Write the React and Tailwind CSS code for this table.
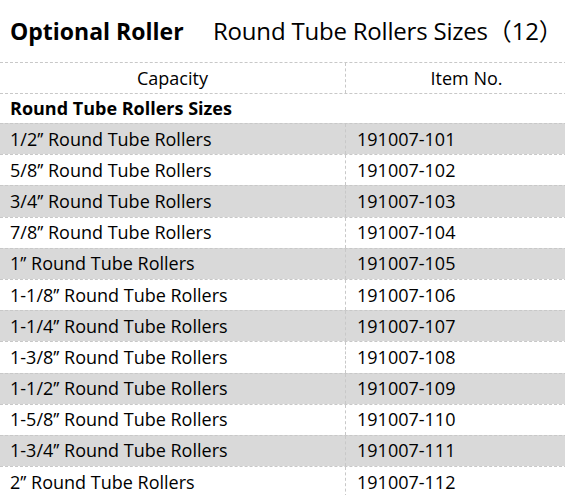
import React from "react";

const rows = [
  ["1/2’’ Round Tube Rollers", "191007-101"],
  ["5/8’’ Round Tube Rollers", "191007-102"],
  ["3/4’’ Round Tube Rollers", "191007-103"],
  ["7/8’’ Round Tube Rollers", "191007-104"],
  ["1’’ Round Tube Rollers", "191007-105"],
  ["1-1/8’’ Round Tube Rollers", "191007-106"],
  ["1-1/4’’ Round Tube Rollers", "191007-107"],
  ["1-3/8’’ Round Tube Rollers", "191007-108"],
  ["1-1/2’’ Round Tube Rollers", "191007-109"],
  ["1-5/8’’ Round Tube Rollers", "191007-110"],
  ["1-3/4’’ Round Tube Rollers", "191007-111"],
  ["2’’ Round Tube Rollers", "191007-112"],
];

const App = () => {
  return (
    <div
      className="w-[565px] h-[495px] overflow-hidden bg-white text-black"
      style={{ fontFamily: '"Open Sans", "Noto Sans CJK SC", sans-serif' }}
    >
      {/* title */}
      <div className="h-[62px] flex items-center pl-[10px] leading-none whitespace-nowrap">
        <span className="font-bold text-[23px] w-[203px] shrink-0">Optional Roller</span>
        <span className="text-[24px] tracking-[-0.2px]">Round Tube Rollers Sizes（12）</span>
      </div>

      <div className="w-[587px] text-[18px] whitespace-nowrap">
        {/* header */}
        <div className="flex h-[31px] border-t border-dashed border-[#c8c8c8]">
          <div className="w-[345px] flex items-center justify-center">Capacity</div>
          <div className="flex-1 flex items-center justify-center border-l border-dashed border-[#c8c8c8]">
            Item No.
          </div>
        </div>

        {/* section */}
        <div className="flex h-[30px] items-center px-[10px] font-bold border-t border-dashed border-[#c8c8c8]">
          Round Tube Rollers Sizes
        </div>

        {rows.map(([name, item], i) => (
          <div
            key={item}
            className={
              "flex h-[31.2px] border-t border-dashed border-[#c8c8c8] " +
              (i % 2 === 0 ? "bg-[#d9d9d9]" : "bg-white")
            }
          >
            <div className="w-[345px] flex items-center px-[10px]">{name}</div>
            <div className="flex-1 flex items-center px-[11px] border-l border-dashed border-[#c8c8c8]">
              {item}
            </div>
          </div>
        ))}
      </div>
    </div>
  );
};

export default App;
